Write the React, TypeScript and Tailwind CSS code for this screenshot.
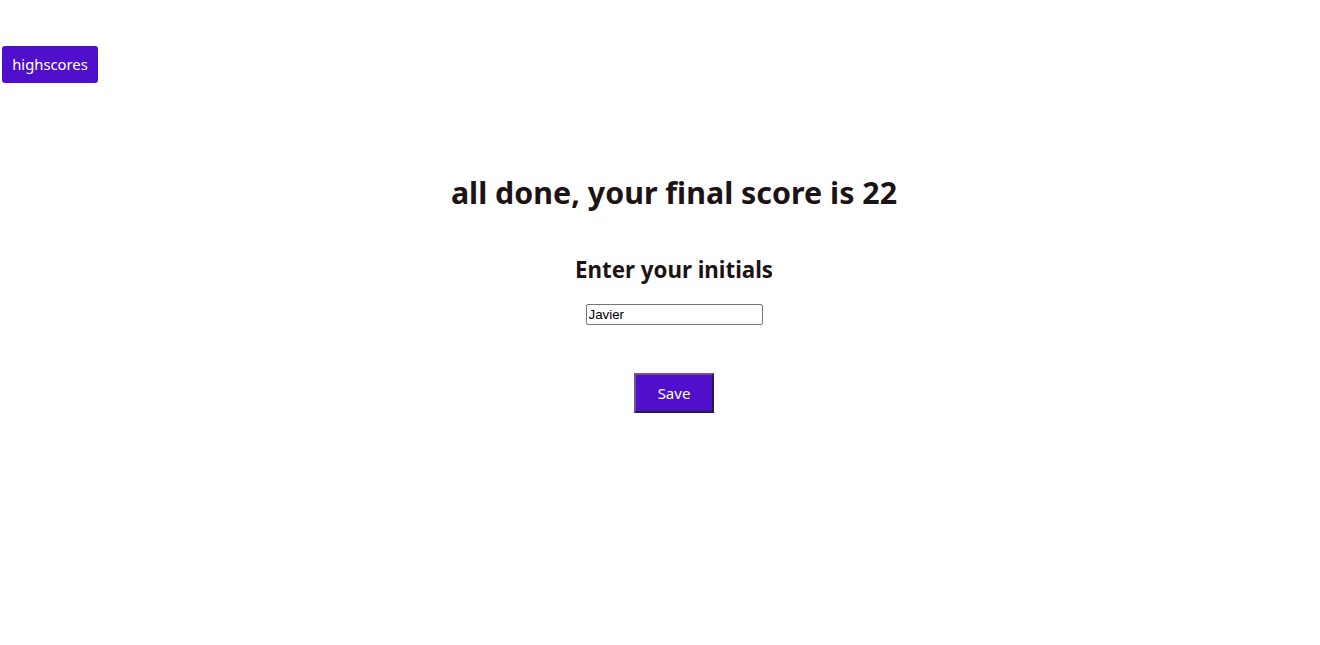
import React from "react";

export default function App() {
  return (
    <div className="min-h-[645px] w-full bg-white text-[#1c1414]" style={{ fontFamily: '"Noto Sans", "Open Sans", sans-serif' }}>
      <div className="pt-[46px] pl-[2px]">
        <button className="h-[37px] w-[96px] rounded-[3px] bg-[#5010cb] text-[14.8px] text-white">highscores</button>
      </div>
      <div className="flex flex-col items-center pl-[28px]">
        <h1 className="mt-[87px] text-[30.4px] font-bold leading-[46px]">all done, your final score is 22</h1>
        <h2 className="mt-[37px] text-[22.3px] font-bold leading-[34px]">Enter your initials</h2>
        <input
          defaultValue="Javier"
          className="mt-[17px] h-[21px] w-[177px] rounded-[2px] border border-[#767676] px-[2px] text-[13.33px] text-black"
          style={{ fontFamily: '"Liberation Sans", Arial, sans-serif' }}
        />
        <button className="mt-[48px] h-[40px] w-[80px] border-2 border-t-[#6b5a8a] border-l-[#6b5a8a] border-r-[#2a1a40] border-b-[#2a1a40] bg-[#5010cb] text-[15px] text-white">Save</button>
      </div>
    </div>
  );
}
